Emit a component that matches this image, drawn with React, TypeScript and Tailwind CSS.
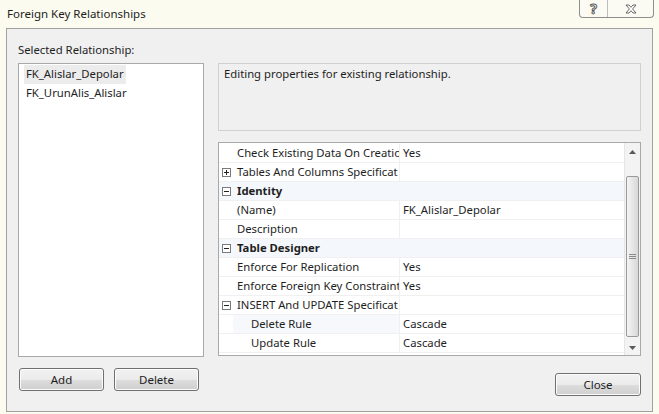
import React from "react";

const FONT = "font-['Noto_Sans','Open_Sans',sans-serif]";

type Row = {
  name: string;
  value?: string;
  kind?: "prop" | "cat";
  toggle?: "plus" | "minus";
  indent?: boolean;
  tint?: boolean;
};

const rows: Row[] = [
  { name: "Check Existing Data On Creatio", value: "Yes" },
  { name: "Tables And Columns Specificat", toggle: "plus" },
  { name: "Identity", kind: "cat", toggle: "minus", tint: true },
  { name: "(Name)", value: "FK_Alislar_Depolar" },
  { name: "Description", value: "" },
  { name: "Table Designer", kind: "cat", toggle: "minus", tint: true },
  { name: "Enforce For Replication", value: "Yes" },
  { name: "Enforce Foreign Key Constraint", value: "Yes" },
  { name: "INSERT And UPDATE Specificat", toggle: "minus" },
  { name: "Delete Rule", value: "Cascade", indent: true, tint: true },
  { name: "Update Rule", value: "Cascade", indent: true },
];

// ── Expand / collapse box ────────────────────────────────────────────────────
function Toggle({ type }: { type: "plus" | "minus" }) {
  return (
    <svg width="9" height="9" viewBox="0 0 9 9" className="block">
      <rect x="0.5" y="0.5" width="8" height="8" fill="#fff" stroke="#7a7a7a" />
      <line x1="2" y1="4.5" x2="7" y2="4.5" stroke="#222" />
      {type === "plus" && <line x1="4.5" y1="2" x2="4.5" y2="7" stroke="#222" />}
    </svg>
  );
}

// ── Win7 push button ─────────────────────────────────────────────────────────
function PushButton({ label, className = "" }: { label: string; className?: string }) {
  return (
    <button
      className={`h-[23px] rounded-[3px] border border-[#707070] bg-[linear-gradient(#f2f2f2_0%,#ebebeb_50%,#dddddd_51%,#cfcfcf_100%)] text-[11.5px] text-[#1e1e1e] shadow-[inset_0_0_0_1px_#fcfcfc] ${className}`}
    >
      {label}
    </button>
  );
}

// ── Vertical scrollbar ───────────────────────────────────────────────────────
function ScrollBar() {
  return (
    <div className="w-[16px] flex flex-col bg-[#f3f3f3] border-l border-[#e6e6e6]">
      <div className="h-[17px] flex items-center justify-center">
        <svg width="7" height="4" viewBox="0 0 7 4">
          <path d="M0 4 L3.5 0 L7 4 Z" fill="#5a5a5a" />
        </svg>
      </div>
      <div className="h-[16px]" />
      <div className="h-[161px] mx-[1px] rounded-[2px] border border-[#9a9a9a] bg-[linear-gradient(90deg,#f4f4f4,#e6e6e6_50%,#d8d8d8)] flex items-center justify-center">
        <svg width="7" height="7" viewBox="0 0 7 7">
          <line x1="0" y1="1.5" x2="7" y2="1.5" stroke="#8a8a8a" />
          <line x1="0" y1="3.5" x2="7" y2="3.5" stroke="#8a8a8a" />
          <line x1="0" y1="5.5" x2="7" y2="5.5" stroke="#8a8a8a" />
        </svg>
      </div>
      <div className="flex-1 flex items-end justify-center pb-[5px]">
        <svg width="7" height="4" viewBox="0 0 7 4">
          <path d="M0 0 L3.5 4 L7 0 Z" fill="#5a5a5a" />
        </svg>
      </div>
    </div>
  );
}

// ── Property grid ────────────────────────────────────────────────────────────
function PropertyGrid() {
  return (
    <div className="h-[214px] border border-[#a9a9a9] bg-white flex">
      <div className="flex-1 flex flex-col pt-[1px]">
        {rows.map((r, i) => (
          <div key={i} className={`h-[19px] flex border-b border-[#f0f0f0] ${r.kind === "cat" ? "bg-[#f4f7fb]" : ""}`}>
            <div className="w-[14px] shrink-0 flex items-center justify-center">
              {r.toggle && <Toggle type={r.toggle} />}
            </div>
            <div
              className={`flex items-center overflow-hidden whitespace-nowrap ${
                r.kind === "cat" ? "flex-1 font-bold" : "w-[167px] border-r border-[#f0f0f0]"
              } ${r.tint && r.kind !== "cat" ? "bg-[#f6f8fb]" : ""} ${r.indent ? "pl-[18px]" : "pl-[4px]"}`}
            >
              {r.name}
            </div>
            {r.kind !== "cat" && (
              <div className="flex-1 flex items-center pl-[3px] whitespace-nowrap">{r.value}</div>
            )}
          </div>
        ))}
      </div>
      <ScrollBar />
    </div>
  );
}

export default function App() {
  return (
    <div className={`relative w-[659px] h-[414px] overflow-hidden bg-[#fbfbef] text-[11.3px] text-[#1e1e1e] ${FONT}`}>
      {/* title bar */}
      <div className="h-[28px] flex items-center pl-[7px] text-[11.5px] text-[#1e1e1e]">
        Foreign Key Relationships
      </div>
      <div className="absolute top-0 right-[5px] flex h-[18px] rounded-b-[4px] border border-t-0 border-[#8d8d8d] bg-[#fbfbf3] overflow-hidden">
        <div className="w-[28px] flex items-center justify-center border-r border-[#bdbdbd] text-[14px] font-bold leading-none text-white [-webkit-text-stroke:1px_#5a5a5a]">
          ?
        </div>
        <div className="w-[45px] flex items-center justify-center">
          <svg width="12" height="10" viewBox="0 0 12 10">
            <path
              d="M1 1 H4 L6 3.3 L8 1 H11 L7.6 5 L11 9 H8 L6 6.7 L4 9 H1 L4.4 5 Z"
              fill="#fff"
              stroke="#5a5a5a"
              strokeWidth="0.9"
              strokeLinejoin="round"
            />
          </svg>
        </div>
      </div>

      {/* dialog body */}
      <div className="mx-[6px] h-[384px] border border-[#a0a0a0] bg-[#f0f0f0] pt-[13px] pl-[11px] pr-[11px]">
        <div className="h-[16px] leading-[16px]">Selected Relationship:</div>
        <div className="mt-[5px] flex gap-[14px]">
          {/* left column */}
          <div className="w-[186px] flex flex-col">
            <div className="h-[294px] border border-[#a9a9a9] bg-white pl-[5px] pt-[1px] flex flex-col items-start">
              <div className="h-[19px] flex items-center px-[2px] bg-[#ececec]">FK_Alislar_Depolar</div>
              <div className="h-[19px] flex items-center px-[2px]">FK_UrunAlis_Alislar</div>
            </div>
            <div className="mt-[11px] flex gap-[10px] pl-[1px]">
              <PushButton label="Add" className="w-[85px]" />
              <PushButton label="Delete" className="w-[85px]" />
            </div>
          </div>

          {/* right column */}
          <div className="flex-1 flex flex-col">
            <div className="h-[68px] border border-[#d0d0d0] bg-[#f0f0f0] pl-[5px] pt-[2px]">
              Editing properties for existing relationship.
            </div>
            <div className="mt-[11px]">
              <PropertyGrid />
            </div>
            <div className="mt-[17px] flex justify-end">
              <PushButton label="Close" className="w-[86px]" />
            </div>
          </div>
        </div>
      </div>
    </div>
  );
}
